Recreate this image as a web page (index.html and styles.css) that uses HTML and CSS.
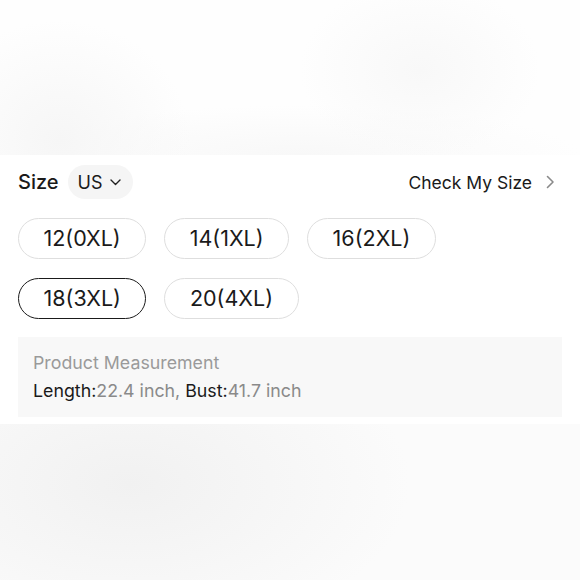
FILE: index.html
```html
<!DOCTYPE html>
<html>
<head>
<meta charset="utf-8">
<link rel="stylesheet" href="styles.css">
</head>
<body>
<div class="page">
  <div class="backdrop backdrop-top"></div>
  <section class="panel">
    <div class="head">
      <div class="head-left">
        <span class="title">Size</span>
        <span class="unit">US
          <svg class="unit-chev" width="11" height="7" viewBox="0 0 11 7"><path d="M1 1l4.5 4.5L10 1" fill="none" stroke="#222" stroke-width="1.4" stroke-linecap="round" stroke-linejoin="round"/></svg>
        </span>
      </div>
      <div class="check">Check My Size
        <svg class="check-chev" width="9" height="14" viewBox="0 0 9 14"><path d="M1.5 1.5L7 7l-5.5 5.5" fill="none" stroke="#8a8a8a" stroke-width="1.6" stroke-linecap="round" stroke-linejoin="round"/></svg>
      </div>
    </div>
    <div class="sizes">
      <button class="size">12(0XL)</button>
      <button class="size">14(1XL)</button>
      <button class="size">16(2XL)</button>
      <button class="size selected">18(3XL)</button>
      <button class="size">20(4XL)</button>
    </div>
    <div class="measure">
      <div class="measure-title">Product Measurement</div>
      <div class="measure-vals"><span class="lbl">Length:</span><span class="val">22.4 inch, </span><span class="lbl">Bust:</span><span class="val">41.7 inch</span></div>
    </div>
  </section>
  <div class="backdrop backdrop-bottom"></div>
</div>
</body>
</html>
```

FILE: styles.css
```css
html, body {
  margin: 0;
  padding: 0;
  background: #fafafa;
}
.page {
  width: 580px;
  height: 580px;
  display: flex;
  flex-direction: column;
  font-family: "Inter", "Liberation Sans", sans-serif;
  color: #1a1a1a;
}
.backdrop-top {
  height: 155px;
  background:
    radial-gradient(ellipse 130px 120px at 60px 140px, #f6f6f6, rgba(246,246,246,0) 100%),
    radial-gradient(ellipse 120px 90px at 420px 70px, #f8f8f8, rgba(248,248,248,0) 100%),
    radial-gradient(ellipse 280px 50px at 300px 155px, #f8f8f8, rgba(248,248,248,0) 100%),
    #fefefe;
}
.backdrop-bottom {
  flex: 1;
  background:
    radial-gradient(ellipse 280px 160px at 130px 60px, #f1f1f1, rgba(241,241,241,0) 100%),
    #fbfbfb;
}
.panel {
  background: #fff;
  padding: 10px 18px 7px;
}
.head {
  display: flex;
  align-items: center;
  justify-content: space-between;
  height: 34px;
}
.head-left {
  display: flex;
  align-items: center;
  gap: 9px;
}
.title {
  font-size: 20px;
  font-weight: 500;
  color: #1a1a1a;
}
.unit {
  display: inline-flex;
  align-items: center;
  gap: 7px;
  height: 34px;
  padding: 0 12px 0 10px;
  border-radius: 17px;
  background: #f5f5f5;
  font-size: 18px;
  color: #1a1a1a;
}
.unit-chev {
  margin-top: 1px;
}
.check {
  display: flex;
  align-items: center;
  gap: 14px;
  font-size: 17.5px;
  color: #1a1a1a;
  padding-right: 7px;
}
.sizes {
  display: flex;
  flex-wrap: wrap;
  column-gap: 18px;
  row-gap: 19px;
  margin-top: 19px;
}
.size {
  height: 41px;
  padding: 0 24.5px;
  border: 1px solid #dedede;
  border-radius: 21px;
  background: #fff;
  font-family: inherit;
  font-size: 21.5px;
  color: #1a1a1a;
  line-height: 1;
}
.size.selected {
  border: 1.5px solid #1a1a1a;
}
.measure {
  margin-top: 18px;
  background: #f8f8f8;
  padding: 12px 15px 12px;
  height: 80px;
  box-sizing: border-box;
  font-size: 17.8px;
  line-height: 28px;
}
.measure-title {
  color: #9a9a9a;
}
.lbl {
  color: #1a1a1a;
}
.val {
  color: #8a8a8a;
}
```
